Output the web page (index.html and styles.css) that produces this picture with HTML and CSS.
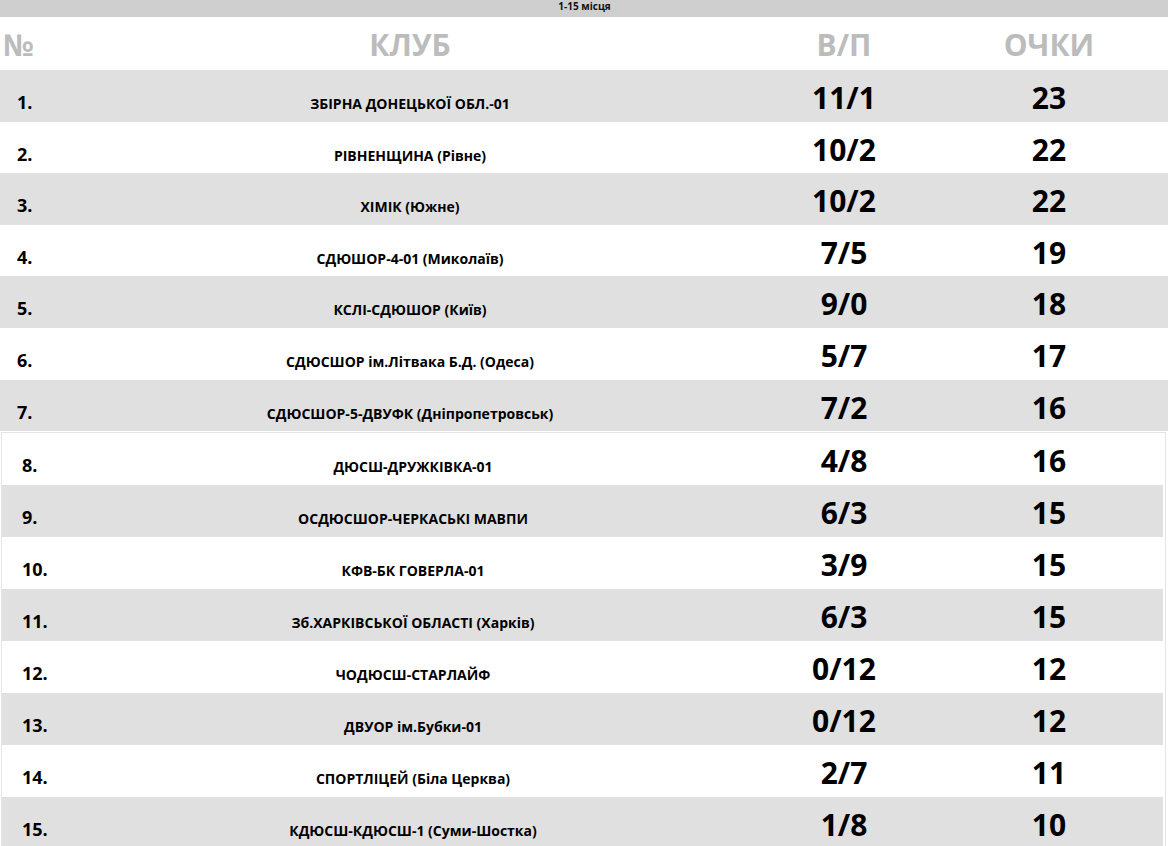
FILE: index.html
```html
<!DOCTYPE html>
<html lang="uk">
<head>
<meta charset="utf-8">
<title>1-15 місця</title>
<link rel="stylesheet" href="styles.css">
</head>
<body>
<div class="topbar">1-15 місця</div>
<div class="table t1">
  <div class="row head">
    <div class="c-no">№</div>
    <div class="c-club">КЛУБ</div>
    <div class="c-wl">В/П</div>
    <div class="c-pts">ОЧКИ</div>
  </div>
  <div class="row grey"><div class="c-no">1.</div><div class="c-club">ЗБІРНА ДОНЕЦЬКОЇ ОБЛ.-01</div><div class="c-wl">11/1</div><div class="c-pts">23</div></div>
  <div class="row"><div class="c-no">2.</div><div class="c-club">РІВНЕНЩИНА (Рівне)</div><div class="c-wl">10/2</div><div class="c-pts">22</div></div>
  <div class="row grey"><div class="c-no">3.</div><div class="c-club">ХІМІК (Южне)</div><div class="c-wl">10/2</div><div class="c-pts">22</div></div>
  <div class="row"><div class="c-no">4.</div><div class="c-club">СДЮШОР-4-01 (Миколаїв)</div><div class="c-wl">7/5</div><div class="c-pts">19</div></div>
  <div class="row grey"><div class="c-no">5.</div><div class="c-club">КСЛІ-СДЮШОР (Київ)</div><div class="c-wl">9/0</div><div class="c-pts">18</div></div>
  <div class="row"><div class="c-no">6.</div><div class="c-club">СДЮСШОР ім.Літвака Б.Д. (Одеса)</div><div class="c-wl">5/7</div><div class="c-pts">17</div></div>
  <div class="row grey"><div class="c-no">7.</div><div class="c-club">СДЮСШОР-5-ДВУФК (Дніпропетровськ)</div><div class="c-wl">7/2</div><div class="c-pts">16</div></div>
</div>
<div class="table t2">
  <div class="row"><div class="c-no">8.</div><div class="c-club">ДЮСШ-ДРУЖКІВКА-01</div><div class="c-wl">4/8</div><div class="c-pts">16</div></div>
  <div class="row grey"><div class="c-no">9.</div><div class="c-club">ОСДЮСШОР-ЧЕРКАСЬКІ МАВПИ</div><div class="c-wl">6/3</div><div class="c-pts">15</div></div>
  <div class="row"><div class="c-no">10.</div><div class="c-club">КФВ-БК ГОВЕРЛА-01</div><div class="c-wl">3/9</div><div class="c-pts">15</div></div>
  <div class="row grey"><div class="c-no">11.</div><div class="c-club">Зб.ХАРКІВСЬКОЇ ОБЛАСТІ (Харків)</div><div class="c-wl">6/3</div><div class="c-pts">15</div></div>
  <div class="row"><div class="c-no">12.</div><div class="c-club">ЧОДЮСШ-СТАРЛАЙФ</div><div class="c-wl">0/12</div><div class="c-pts">12</div></div>
  <div class="row grey"><div class="c-no">13.</div><div class="c-club">ДВУОР ім.Бубки-01</div><div class="c-wl">0/12</div><div class="c-pts">12</div></div>
  <div class="row"><div class="c-no">14.</div><div class="c-club">СПОРТЛІЦЕЙ (Біла Церква)</div><div class="c-wl">2/7</div><div class="c-pts">11</div></div>
  <div class="row grey"><div class="c-no">15.</div><div class="c-club">КДЮСШ-КДЮСШ-1 (Суми-Шостка)</div><div class="c-wl">1/8</div><div class="c-pts">10</div></div>
</div>
</body>
</html>
```

FILE: styles.css
```css
html, body {
  margin: 0;
  padding: 0;
  background: #ffffff;
}
body {
  font-family: "Open Sans", "Noto Sans", sans-serif;
  font-weight: 700;
  color: #000;
  overflow: hidden;
}
.topbar {
  height: 17px;
  background: #cfcfcf;
  font-size: 10px;
  line-height: 13px;
  text-align: center;
  color: #111;
  padding-left: 1px;
  box-sizing: border-box;
}
.table {
  display: flex;
  flex-direction: column;
}
.row {
  display: grid;
  align-items: baseline;
  box-sizing: border-box;
}
.t1 .row {
  grid-template-columns: 62px 696px 172px 238px;
  height: 51.6px;
  padding-top: 10px;
}
.t1 .row.head {
  height: 53px;
  padding-top: 10px;
}
.t2 {
  margin: 1px 2px 0 1px;
  border: 1px solid #e4e4e4;
  border-bottom: none;
  padding-right: 2px;
}
.t2 .row {
  grid-template-columns: 71px 680px 182px 228px;
  height: 52px;
  padding-top: 10px;
}
.row.grey {
  background: #e0e0e0;
}
.c-no {
  font-size: 18px;
  line-height: 24px;
  padding-left: 17px;
}
.t2 .c-no {
  padding-left: 20px;
}
.c-club {
  font-size: 14px;
  line-height: 20px;
  text-align: center;
}
.c-wl, .c-pts {
  font-size: 30px;
  line-height: 36px;
  text-align: center;
}
.head > div {
  font-size: 30px;
  line-height: 36px;
  color: #bcbcbc;
}
.head .c-no {
  padding-left: 3px;
}
```
